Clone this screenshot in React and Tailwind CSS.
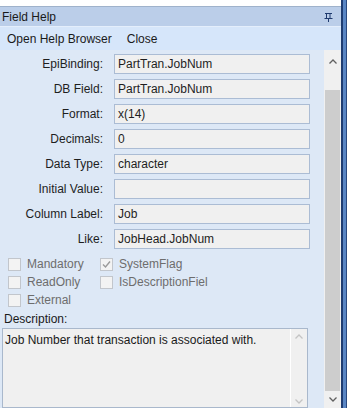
import React from "react";

const FONT = { fontFamily: '"Liberation Sans", Arial, sans-serif' };

function Field({ label, value }) {
  return (
    <div className="flex items-center h-[20px]">
      <div className="w-[104px] text-right text-[12px] text-[#1e1e1e] pr-[1px]">{label}</div>
      <div className="ml-[10px] w-[196px] h-[20px] border border-[#abbcd4] bg-[#f0f0f0] flex items-center px-[3px] text-[12px] text-[#1e1e1e]">
        {value}
      </div>
    </div>
  );
}

function Check({ label, checked }) {
  return (
    <div className="flex items-center h-[18px]">
      <div className="w-[13px] h-[13px] border border-[#c2c6cc] bg-[#f3f3f3] flex items-center justify-center">
        {checked && (
          <svg width="9" height="9" viewBox="0 0 9 9">
            <path d="M1 4.5 L3.5 7 L8 1.5" stroke="#9a9a9a" strokeWidth="1.4" fill="none" />
          </svg>
        )}
      </div>
      <span className="ml-[6px] text-[12px] text-[#6d6d6d] whitespace-nowrap">{label}</span>
    </div>
  );
}

function ChevUp({ color }) {
  return (
    <svg width="8" height="5" viewBox="0 0 8 5">
      <path d="M0.5 4.5 L4 1 L7.5 4.5" stroke={color} strokeWidth="1.3" fill="none" />
    </svg>
  );
}
function ChevDown({ color }) {
  return (
    <svg width="8" height="5" viewBox="0 0 8 5">
      <path d="M0.5 0.5 L4 4 L7.5 0.5" stroke={color} strokeWidth="1.3" fill="none" />
    </svg>
  );
}

export default function App() {
  return (
    <div className="w-[347px] h-[408px] overflow-hidden flex bg-white" style={FONT}>
      <div className="w-[341px] h-full flex flex-col">
        <div className="h-[7px] bg-white border-b border-[#9fb2cb] shrink-0" />
        <div className="h-[19px] bg-[#bbcee9] flex items-center justify-between px-[2px] pt-[1px] shrink-0">
          <span className="text-[12px] text-[#1a1a1a]">Field Help</span>
          <svg width="9" height="10" viewBox="0 0 9 10" className="mr-[6px]">
            <path d="M1 1.5 H8" stroke="#1f3a6e" strokeWidth="1" />
            <path d="M2.5 1.5 V6 M6 1.5 V6" stroke="#1f3a6e" strokeWidth="1" />
            <path d="M0.5 6.5 H8.5" stroke="#1f3a6e" strokeWidth="1" />
            <path d="M4.5 6.5 V10" stroke="#1f3a6e" strokeWidth="1" />
          </svg>
        </div>
        <div className="h-[24px] bg-[#d6e6fa] border-t border-[#e4eefb] flex items-center text-[12px] text-[#1a1a1a] shrink-0">
          <span className="ml-[7px]">Open Help Browser</span>
          <span className="ml-[15px]">Close</span>
        </div>
        <div className="flex-1 flex bg-[#dde8f6] min-h-0">
          <div className="w-[324px] flex flex-col pt-[4px]">
            <div className="flex flex-col gap-[5px]">
              <Field label="EpiBinding:" value="PartTran.JobNum" />
              <Field label="DB Field:" value="PartTran.JobNum" />
              <Field label="Format:" value="x(14)" />
              <Field label="Decimals:" value="0" />
              <Field label="Data Type:" value="character" />
              <Field label="Initial Value:" value="" />
              <Field label="Column Label:" value="Job" />
              <Field label="Like:" value="JobHead.JobNum" />
            </div>
            <div className="flex mt-[6px] ml-[8px]">
              <div className="w-[92px] flex flex-col">
                <Check label="Mandatory" />
                <Check label="ReadOnly" />
                <Check label="External" />
              </div>
              <div className="flex flex-col">
                <Check label="SystemFlag" checked />
                <Check label="IsDescriptionFiel" />
              </div>
            </div>
            <div className="ml-[4px] mt-[3px] text-[12px] text-[#1a1a1a] leading-[14px]">Description:</div>
            <div className="ml-[2px] mt-[2px] w-[306px] flex-1 border border-[#a9b8cc] bg-[#f0f0f0] flex">
              <div className="flex-1 px-[2px] pt-[2px] text-[12px] text-[#1a1a1a]">
                Job Number that transaction is associated with.
              </div>
              <div className="w-[17px] border-l border-[#ffffff] flex flex-col items-center justify-between pt-[5px] pb-[3px]">
                <ChevUp color="#c4c4c4" />
                <ChevDown color="#c4c4c4" />
              </div>
            </div>
          </div>
          <div className="w-[17px] flex flex-col bg-[#f0f0f0]">
            <div className="h-[22px] flex items-center justify-center">
              <ChevUp color="#606060" />
            </div>
            <div className="h-[18px]" />
            <div className="flex-1 mx-[1px] bg-[#cdcdcd]" />
            <div className="h-[17px] flex items-center justify-center">
              <ChevDown color="#606060" />
            </div>
          </div>
        </div>
      </div>
      <div className="w-[6px] h-full flex">
        <div className="w-[2px] bg-[#1f3d72]" />
        <div className="w-[3px] bg-[#5a86c4]" />
        <div className="w-[1px] bg-[#2a4a80]" />
      </div>
    </div>
  );
}
